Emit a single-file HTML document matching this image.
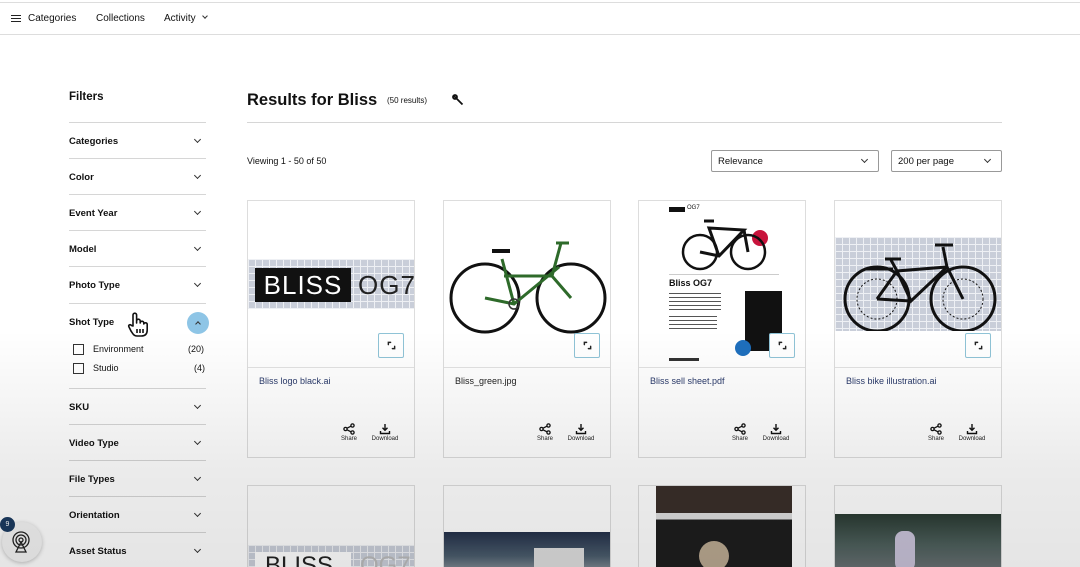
<!DOCTYPE html>
<html><head><meta charset="utf-8"><style>
*{margin:0;padding:0;box-sizing:border-box}
html,body{width:1080px;height:567px;overflow:hidden}
body{background:#fff;font-family:"Liberation Sans",Arial,sans-serif;color:#111;position:relative}
.a{position:absolute}
.hdr{left:0;top:2px;width:1080px;height:33px;border-top:1px solid #ddd;border-bottom:1px solid #ddd;font-size:10px}
.side .row{position:absolute;left:69px;width:137px;border-top:1px solid #d6d6d6;height:36px}
.side .row b{position:absolute;left:0;top:13px;font-size:9.5px}
.chev{position:absolute;width:5px;height:5px;border-right:1.3px solid #333;border-bottom:1.3px solid #333;transform:rotate(45deg)}
.card{position:absolute;width:168px;height:258px;border:1px solid #ddd;background:#fff;overflow:hidden}
.card .img{position:absolute;left:0;top:0;width:166px;height:167px;border-bottom:1px solid #e2e2e2;overflow:hidden}
.card .t{position:absolute;left:11px;top:175px;font-size:9px;color:#2a3a6a}
.exp{position:absolute;left:130px;top:132px;width:26px;height:25px;border:1px solid #8fc3d6;border-radius:2px;background:#fff}
.act{position:absolute;top:222px;font-size:6px;text-align:center;color:#222;width:30px}
.act svg{display:block;margin:0 auto 1px}
.grid{background-color:#c9ced9;background-image:linear-gradient(#eef0f4 1px,transparent 1px),linear-gradient(90deg,#eef0f4 1px,transparent 1px);background-size:7px 7px}
.sel{position:absolute;top:150px;height:22px;border:1px solid #999;border-radius:2px;font-size:9.5px;padding:5px 6px}
</style></head><body>

<div class="a hdr">
  <div class="a" style="left:11px;top:12px;width:10px;height:1.3px;background:#222;box-shadow:0 3px 0 #222,0 6px 0 #222"></div>
  <div class="a" style="left:28px;top:10px">Categories</div>
  <div class="a" style="left:96px;top:10px">Collections</div>
  <div class="a" style="left:164px;top:10px">Activity</div>
  <div class="chev" style="left:203px;top:11px;width:4px;height:4px"></div>
</div>

<div class="a" style="left:69px;top:91px;font-size:11.5px;font-weight:bold">Filters</div>
<div class="side">
  <div class="row" style="top:122px"><b>Categories</b><i class="chev" style="left:126px;top:14px"></i></div>
  <div class="row" style="top:158px"><b>Color</b><i class="chev" style="left:126px;top:14px"></i></div>
  <div class="row" style="top:194px"><b>Event Year</b><i class="chev" style="left:126px;top:14px"></i></div>
  <div class="row" style="top:230px"><b>Model</b><i class="chev" style="left:126px;top:14px"></i></div>
  <div class="row" style="top:266px"><b>Photo Type</b><i class="chev" style="left:126px;top:14px"></i></div>
  <div class="row" style="top:303px;height:85px"><b>Shot Type</b>
    <div class="a" style="left:118px;top:8px;width:22px;height:22px;border-radius:50%;background:#8ec5e6"></div>
    <div class="chev" style="left:127px;top:18px;transform:rotate(225deg);width:4px;height:4px"></div>
    <div class="a" style="left:4px;top:40px;width:11px;height:11px;border:1.3px solid #333"></div>
    <div class="a" style="left:24px;top:40px;font-size:9px">Environment</div>
    <div class="a" style="left:119px;top:40px;font-size:9px">(20)</div>
    <div class="a" style="left:4px;top:59px;width:11px;height:11px;border:1.3px solid #333"></div>
    <div class="a" style="left:24px;top:59px;font-size:9px">Studio</div>
    <div class="a" style="left:125px;top:59px;font-size:9px">(4)</div>
    <svg class="a" style="left:58px;top:8px" width="22" height="26" viewBox="0 0 22 26" fill="#fff" stroke="#111" stroke-width="1.6" stroke-linejoin="round"><path d="M6 14 V3 a1.8 1.8 0 0 1 3.6 0 V11 V9 a1.8 1.8 0 0 1 3.6 0 V11 a1.8 1.8 0 0 1 3.6 0 V12 a1.8 1.8 0 0 1 3.4 0 V18 c0 4-2 6-6 6 H10 c-3 0-4-2-6-5 L2 15 c-1-2 1-3 2.5-1.5 Z"/><path d="M10 17 V21 M13 17 V21 M16 17 V21"/></svg>
  </div>
  <div class="row" style="top:388px"><b>SKU</b><i class="chev" style="left:126px;top:14px"></i></div>
  <div class="row" style="top:424px"><b>Video Type</b><i class="chev" style="left:126px;top:14px"></i></div>
  <div class="row" style="top:460px"><b>File Types</b><i class="chev" style="left:126px;top:14px"></i></div>
  <div class="row" style="top:496px"><b>Orientation</b><i class="chev" style="left:126px;top:14px"></i></div>
  <div class="row" style="top:532px"><b>Asset Status</b><i class="chev" style="left:126px;top:14px"></i></div>
</div>
<div class="a" style="left:2px;top:522px;width:40px;height:40px;border-radius:50%;background:#f3f3f3;box-shadow:0 1px 4px rgba(0,0,0,.25)"></div>
<svg class="a" style="left:10px;top:530px" width="22" height="24" viewBox="0 0 22 24" fill="none" stroke="#222" stroke-width="1.3"><circle cx="11" cy="10" r="2"/><circle cx="11" cy="10" r="5"/><circle cx="11" cy="10" r="8"/><path d="M11 12 L6 22 H16 Z"/></svg>
<div class="a" style="left:0;top:517px;width:15px;height:15px;border-radius:50%;background:#1b3a60;color:#fff;font-size:7px;text-align:center;line-height:15px">9</div>

<div class="a" style="left:247px;top:91px;font-size:16.5px;font-weight:bold">Results for Bliss</div>
<div class="a" style="left:387px;top:96px;font-size:8px">(50 results)</div>
<svg class="a" style="left:452px;top:94px" width="12" height="12" viewBox="0 0 12 12" fill="none" stroke="#111" stroke-width="1.8"><path d="M2 2 L6 6 L10.5 10.5"/><circle cx="3" cy="3" r="2"/></svg>
<div class="a" style="left:247px;top:122px;width:755px;height:1px;background:#d6d6d6"></div>
<div class="a" style="left:247px;top:156px;font-size:9px">Viewing 1 - 50 of 50</div>
<div class="sel" style="left:711px;width:168px">Relevance<i class="chev" style="left:150px;top:6px"></i></div>
<div class="sel" style="left:891px;width:111px">200 per page<i class="chev" style="left:93px;top:6px"></i></div>

<svg width="0" height="0" style="position:absolute"><defs>
<symbol id="sh" viewBox="0 0 12 12"><g fill="none" stroke="#111" stroke-width="1.3"><circle cx="9.5" cy="2.5" r="1.6"/><circle cx="2.5" cy="6" r="1.6"/><circle cx="9.5" cy="9.5" r="1.6"/><path d="M4 5.2 L8 3.2 M4 6.8 L8 8.8"/></g></symbol>
<symbol id="dl" viewBox="0 0 12 12"><g fill="none" stroke="#111" stroke-width="1.4"><path d="M6 1 V7 M3.5 4.8 L6 7.3 L8.5 4.8 M1.5 8 V10.5 H10.5 V8"/></g></symbol>
<symbol id="ex" viewBox="0 0 10 10"><g fill="none" stroke="#222" stroke-width="1.6" stroke-linecap="round"><path d="M1.5 4 V1.5 H4 M8.5 6 V8.5 H6"/></g></symbol>
</defs></svg>

<!-- card 1 -->
<div class="card" style="left:247px;top:200px"><div class="img">
  <div class="a grid" style="left:0;top:58px;width:166px;height:50px"></div>
  <div class="a" style="left:7px;top:67px;width:96px;height:34px;background:#111;color:#fff;font-size:26px;line-height:34px;text-align:center;letter-spacing:1px">BLISS</div>
  <div class="a" style="left:110px;top:67px;color:#222;font-size:26px;line-height:34px;letter-spacing:1px">OG7</div>
  <div class="exp"><svg class="a" style="left:8px;top:7px" width="9" height="9"><use href="#ex"/></svg></div></div>
  <div class="t">Bliss logo black.ai</div>
  <div class="act" style="left:86px"><svg width="12" height="12"><use href="#sh"/></svg>Share</div><div class="act" style="left:122px"><svg width="12" height="12"><use href="#dl"/></svg>Download</div>
</div>
<!-- card 2 -->
<div class="card" style="left:443px;top:200px"><div class="img">
  <svg class="a" style="left:0;top:30px" width="166" height="110" viewBox="0 0 166 110" fill="none">
    <circle cx="41" cy="67" r="34" stroke="#111" stroke-width="3"/><circle cx="127" cy="67" r="34" stroke="#111" stroke-width="3"/>
    <path d="M41 67 L70 73 L115 36 M58 28 L70 73 M60 45 L108 45 L127 67 M108 45 L117 12 M112 12 L125 12" stroke="#2e6a2a" stroke-width="3"/>
    <path d="M48 20 H66" stroke="#111" stroke-width="4"/><circle cx="70" cy="73" r="5" stroke="#333" stroke-width="1.5"/>
  </svg><div class="exp"><svg class="a" style="left:8px;top:7px" width="9" height="9"><use href="#ex"/></svg></div></div>
  <div class="t" style="color:#222">Bliss_green.jpg</div>
  <div class="act" style="left:86px"><svg width="12" height="12"><use href="#sh"/></svg>Share</div><div class="act" style="left:122px"><svg width="12" height="12"><use href="#dl"/></svg>Download</div>
</div>
<!-- card 3 -->
<div class="card" style="left:638px;top:200px"><div class="img">
  <div class="a" style="left:30px;top:6px;width:16px;height:5px;background:#111"></div><div class="a" style="left:48px;top:4px;font-size:6px">OG7</div>
  <svg class="a" style="left:40px;top:15px" width="90" height="55" viewBox="0 0 90 55" fill="none" stroke="#111"><circle cx="81" cy="22" r="8" fill="#c8143c" stroke="none"/><circle cx="21" cy="36" r="17" stroke-width="2.5"/><circle cx="69" cy="36" r="17" stroke-width="2.5"/><path d="M21 36 L40 40 L65 14 L30 12 L40 40 M65 14 L69 36 M25 5 H35" stroke-width="3"/></svg>
  <div class="a" style="left:30px;top:73px;width:110px;height:1px;background:#ccc"></div>
  <div class="a" style="left:30px;top:77px;font-size:9px;font-weight:bold">Bliss OG7</div>
  <div class="a" style="left:30px;top:92px;width:52px;height:20px;background:repeating-linear-gradient(#555 0 1px,transparent 1px 4px)"></div>
  <div class="a" style="left:30px;top:115px;width:48px;height:16px;background:repeating-linear-gradient(#555 0 1px,transparent 1px 4px)"></div>
  <div class="a" style="left:106px;top:90px;width:37px;height:60px;background:#111"></div>
  <div class="a" style="left:96px;top:139px;width:16px;height:16px;border-radius:50%;background:#1e6fbd"></div>
  <div class="a" style="left:30px;top:157px;width:30px;height:3px;background:#333"></div>
  <div class="exp"><svg class="a" style="left:8px;top:7px" width="9" height="9"><use href="#ex"/></svg></div></div>
  <div class="t">Bliss sell sheet.pdf</div>
  <div class="act" style="left:86px"><svg width="12" height="12"><use href="#sh"/></svg>Share</div><div class="act" style="left:122px"><svg width="12" height="12"><use href="#dl"/></svg>Download</div>
</div>
<!-- card 4 -->
<div class="card" style="left:834px;top:200px"><div class="img">
  <div class="a grid" style="left:0;top:36px;width:166px;height:94px"></div>
  <svg class="a" style="left:0;top:36px" width="166" height="94" viewBox="0 0 166 94" fill="none" stroke="#111"><circle cx="42" cy="62" r="32" stroke-width="3"/><circle cx="128" cy="62" r="32" stroke-width="3"/><circle cx="42" cy="62" r="20" stroke-width="1" stroke-dasharray="2 2"/><circle cx="128" cy="62" r="20" stroke-width="1" stroke-dasharray="2 2"/><path d="M42 62 L62 34 L112 30 L128 62 M62 34 L76 64 L112 30 M76 64 L42 62 M56 23 L62 34 M50 22 H66 M108 10 L112 30 M100 8 H118 M30 32 H58" stroke-width="3"/></svg>
  <div class="exp"><svg class="a" style="left:8px;top:7px" width="9" height="9"><use href="#ex"/></svg></div></div>
  <div class="t">Bliss bike illustration.ai</div>
  <div class="act" style="left:86px"><svg width="12" height="12"><use href="#sh"/></svg>Share</div><div class="act" style="left:122px"><svg width="12" height="12"><use href="#dl"/></svg>Download</div>
</div>

<!-- row 2 -->
<div class="card" style="left:247px;top:485px;height:82px;border-bottom:none"><div class="a grid" style="left:0;top:59px;width:166px;height:40px"></div><div class="a" style="left:7px;top:66px;width:96px;height:30px;background:#fff;font-size:24px;padding-left:10px;color:#222">BLISS</div><div class="a" style="left:112px;top:66px;font-size:24px;color:#bbb">OG7</div></div>
<div class="card" style="left:443px;top:485px;height:82px;border-bottom:none"><div class="a" style="left:0;top:46px;width:166px;height:40px;background:linear-gradient(180deg,#24304a,#4a5c6c 60%,#8a939a)"></div><div class="a" style="left:90px;top:62px;width:50px;height:30px;background:#ddd"></div></div>
<div class="card" style="left:638px;top:485px;height:82px;border-bottom:none"><div class="a" style="left:17px;top:0;width:136px;height:90px;background:linear-gradient(180deg,#3a2f2a 0 30%,#ddd 30% 37%,#1e1e1e 37%)"></div><div class="a" style="left:60px;top:55px;width:30px;height:30px;border-radius:50%;background:#b9a890"></div></div>
<div class="card" style="left:834px;top:485px;height:82px;border-bottom:none"><div class="a" style="left:0;top:28px;width:166px;height:60px;background:linear-gradient(180deg,#2a3a32,#4c5e5a 50%,#6e7478)"></div><div class="a" style="left:60px;top:45px;width:20px;height:40px;background:#c8c2d8;border-radius:8px"></div></div>

<div class="a" style="left:0;top:0;width:1080px;height:567px;pointer-events:none;background:linear-gradient(180deg,rgba(0,0,0,0) 0,rgba(0,0,0,0) 330px,rgba(0,0,0,.08) 470px,rgba(0,0,0,.1) 567px)"></div>
</body></html>
